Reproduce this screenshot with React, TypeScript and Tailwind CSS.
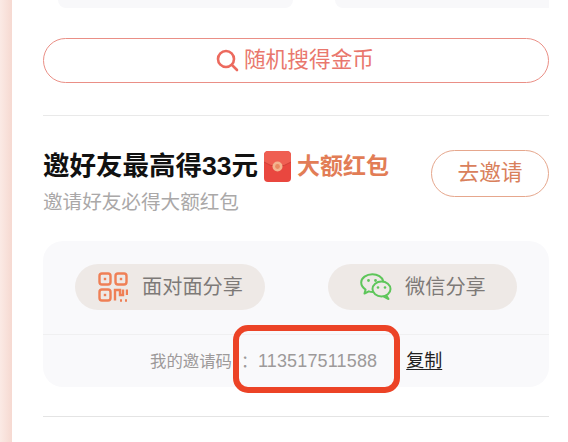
import React from "react";

function SearchIcon() {
  return (
    <svg width="23" height="23" viewBox="0 0 23 23" fill="none" stroke="#ec6a5e" strokeWidth="2.6" strokeLinecap="round">
      <circle cx="10" cy="10" r="8" />
      <path d="M16 16 L21 21" />
    </svg>
  );
}

function RedPacket() {
  return (
    <svg width="27" height="31" viewBox="0 0 27 31">
      <rect x="0" y="0" width="27" height="31" rx="4" fill="#e9473f" />
      <path d="M0 11 Q13.5 20 27 11 L27 5 Q27 0 22 0 L5 0 Q0 0 0 5 Z" fill="#ef5f52" />
      <path d="M0 11 Q13.5 20 27 11" fill="none" stroke="#c93a33" strokeWidth="0.8" />
      <circle cx="13.5" cy="15.5" r="5" fill="#f3b48f" />
      <circle cx="13.5" cy="15.5" r="2.4" fill="#e98a62" />
    </svg>
  );
}

function QrIcon() {
  return (
    <svg width="30" height="30" viewBox="0 0 30 30" fill="none" stroke="#ef7f55" strokeWidth="2.4">
      <rect x="1.5" y="1.5" width="11" height="11" rx="2.5" />
      <rect x="17.5" y="1.5" width="11" height="11" rx="2.5" />
      <rect x="1.5" y="17.5" width="11" height="11" rx="2.5" />
      <rect x="5.8" y="5.8" width="2.4" height="2.4" fill="#ef7f55" stroke="none" />
      <rect x="21.8" y="5.8" width="2.4" height="2.4" fill="#ef7f55" stroke="none" />
      <rect x="5.8" y="21.8" width="2.4" height="2.4" fill="#ef7f55" stroke="none" />
      <path d="M17 28.5 V18 H22 V23 H25 V17.5 M29 17.5 V23" />
      <path d="M22 28.5 H24 M27 28.5 H29" />
    </svg>
  );
}

function WechatIcon() {
  return (
    <svg width="32" height="28" viewBox="0 0 32 28" fill="none" stroke="#5ec65a" strokeWidth="2">
      <path d="M13 19 C11.5 19 10 18.8 8.8 18.3 L4.5 20.5 L5.6 16.6 C2.8 14.8 1.2 12.2 1.2 9.6 C1.2 5 6.4 1.2 12.4 1.2 C17.6 1.2 22.2 4 23.2 8" strokeLinejoin="round" />
      <ellipse cx="21.5" cy="16" rx="9" ry="7.5" />
      <path d="M26 22 L28.5 26 L23.5 23.4" strokeLinejoin="round" />
      <circle cx="8.5" cy="7.5" r="1.4" fill="#5ec65a" stroke="none" />
      <circle cx="15.5" cy="7.5" r="1.4" fill="#5ec65a" stroke="none" />
      <circle cx="18" cy="14.5" r="1.3" fill="#5ec65a" stroke="none" />
      <circle cx="25" cy="14.5" r="1.3" fill="#5ec65a" stroke="none" />
    </svg>
  );
}

export default function App() {
  return (
    <div
      className="relative flex h-[442px] w-[568px] overflow-hidden bg-white"
      style={{ fontFamily: '"Liberation Sans", "Noto Sans CJK SC", sans-serif' }}
    >
      {/* page edge */}
      <div className="h-full w-3 bg-gradient-to-r from-[#fbeae5] to-[#f6d9d1]" />

      <div className="ml-[31px] w-[506px]">
        {/* cards cut off at the top */}
        <div className="flex h-2 gap-[42px] pl-[15px]">
          <div className="h-2 w-[235px] rounded-b-[20px] bg-[#f8f8fa]" />
          <div className="h-2 flex-1 rounded-bl-[20px] bg-[#f8f8fa]" />
        </div>

        {/* search coins */}
        <button className="mt-[30px] flex h-[45px] w-full items-center justify-center gap-[5px] rounded-full border-[1.5px] border-[#ea8f86] pr-[2px] text-[21.7px] text-[#e9776d]">
          <SearchIcon />
          <span>随机搜得金币</span>
        </button>

        <div className="mt-[32px] h-px bg-[#e9e9e9]" />

        {/* invite header */}
        <div className="mt-[34px] flex items-start justify-between">
          <div>
            <div className="flex h-[32px] items-center">
              <span className="text-[26.5px] font-bold leading-none text-[#111]">邀好友最高得33元</span>
              <span className="ml-[6px] flex"><RedPacket /></span>
              <span className="ml-[6px] text-[23px] font-bold leading-none text-[#e27d56]">大额红包</span>
            </div>
            <div className="mt-[8px] text-[19.6px] leading-[24px] text-[#aaa8a8]">邀请好友必得大额红包</div>
          </div>
          <button className="flex h-[47px] w-[118px] items-center justify-center rounded-full border-[1.5px] border-[#e6a78d] text-[21.7px] text-[#d9805c]">
            去邀请
          </button>
        </div>

        {/* share card */}
        <div className="mt-[27px] h-[146px] rounded-[20px] bg-[#f9f9fb]">
          <div className="flex h-[93px] gap-[63px] pl-[32px] pt-[23px]">
            <div className="flex h-[46px] w-[190px] items-center gap-[14px] rounded-full bg-[#eee9e6] pl-[23px] text-[20.2px] text-[#7d7977]">
              <QrIcon />
              <span>面对面分享</span>
            </div>
            <div className="flex h-[46px] w-[189px] items-center gap-[13px] rounded-full bg-[#eee9e6] pl-[32px] text-[20.2px] text-[#7d7977]">
              <WechatIcon />
              <span>微信分享</span>
            </div>
          </div>
          <div className="flex h-[53px] items-center border-t border-[#f0f0f1] pl-[107px] text-[16.4px] text-[#9d9a9a]">
            <span>我的邀请码</span>
            <span className="ml-[9px] w-[17px]">：</span>
            <span className="text-[18px] tracking-[0.15px]">113517511588</span>
            <span className="ml-[29px] text-[18px] text-[#222] underline underline-offset-2">复制</span>
          </div>
        </div>

        <div className="mt-[29px] h-px bg-[#e4e4e4]" />
      </div>

      {/* red annotation box */}
      <div className="absolute left-[233px] top-[325px] h-[68px] w-[167px] rounded-[15px] border-[6px] border-[#ec4326]" />
    </div>
  );
}
